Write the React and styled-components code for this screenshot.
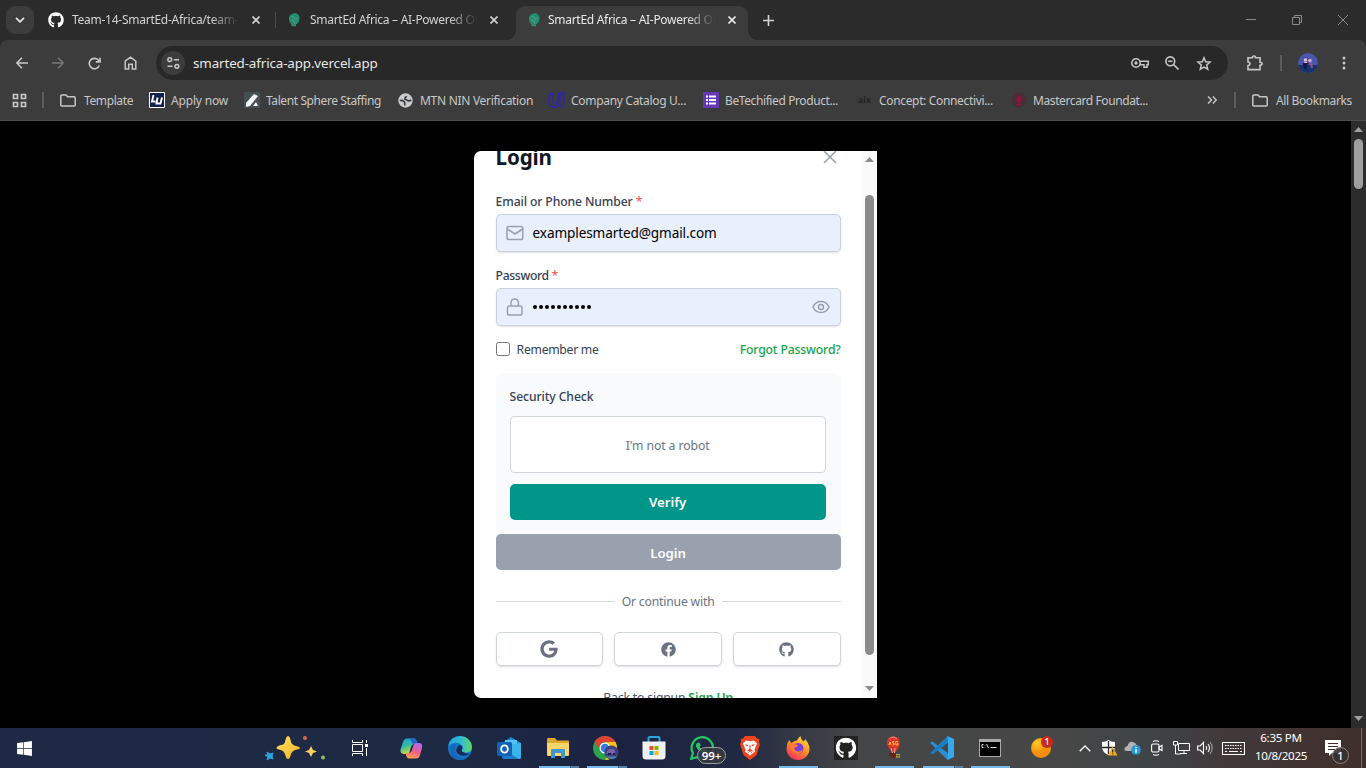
import React from "react";
import styled, { createGlobalStyle, css } from "styled-components";
import { FaGithub, FaFacebook, FaGoogle, FaWindows } from "react-icons/fa";

const Global = createGlobalStyle`
  *, *::before, *::after { box-sizing: border-box; }
  html, body { margin: 0; height: 100%; overflow: hidden; background: #000; }
  body { font-family: "Noto Sans", "Open Sans", sans-serif; font-size: 12px; }
  svg { display: block; flex: none; }
`;

const Screen = styled.div`
  width: 1366px;
  height: 768px;
  display: flex;
  flex-direction: column;
  overflow: hidden;
  background: #000;
`;

/* ---------- text ---------- */
const Text = styled.span`
  white-space: pre;
  letter-spacing: ${(p) => p.$ls || 0}px;
`;

/* ---------- tab strip ---------- */
const TabStrip = styled.header`
  height: 40px;
  flex: none;
  display: flex;
  background: #2b2b2b;
  color: #d3d3d3;
`;
const TabSearch = styled.div`
  width: 28px;
  height: 28px;
  margin: 6px 4px 0 6px;
  border-radius: 9px;
  background: #3c3c3c;
  display: grid;
  place-items: center;
`;
const Tab = styled.div`
  width: ${(p) => p.$width}px;
  flex: none;
  height: 34px;
  margin-top: 6px;
  padding: 0 ${(p) => p.$right}px 6px 10px;
  display: flex;
  align-items: center;
  position: relative;
  ${(p) =>
    p.$active &&
    css`
      background: #3c3c3c;
      color: #e8e8e8;
      border-radius: 9px 9px 0 0;
      &::before,
      &::after {
        content: "";
        position: absolute;
        bottom: 0;
        width: 9px;
        height: 9px;
      }
      &::before {
        left: -9px;
        background: radial-gradient(circle at 0 0, transparent 8.5px, #3c3c3c 9px);
      }
      &::after {
        right: -9px;
        background: radial-gradient(circle at 100% 0, transparent 8.5px, #3c3c3c 9px);
      }
    `}
`;
const Favicon = styled.span`
  width: 16px;
  margin-right: ${(p) => p.$gap}px;
  display: grid;
  place-items: center;
`;
const TabTitle = styled(Text)`
  flex: 1;
  overflow: hidden;
  margin-right: 13px;
  line-height: 20px;
  mask-image: linear-gradient(90deg, #000 calc(100% - 28px), transparent 100%);
`;
const TabDivider = styled.i`
  width: 1px;
  height: 16px;
  margin-top: 12px;
  background: #4a4a4a;
`;
const NewTab = styled.div`
  width: 40px;
  display: grid;
  place-items: center;
`;
const WindowControls = styled.div`
  margin-left: auto;
  display: flex;
`;
const WindowButton = styled.div`
  width: 46px;
  display: grid;
  place-items: center;
  color: #8a8a8a;
`;

/* ---------- toolbar ---------- */
const BrowserBar = styled.div`
  height: 81px;
  flex: none;
  background: #3c3c3c;
  border-bottom: 1px solid #4c4c4c;
  border-radius: 8px 8px 0 0;
  color: #c7c7c7;
`;
const BarBacking = styled.div`
  background: #2b2b2b;
`;
const Toolbar = styled.div`
  height: 40px;
  padding: 6px 4px 0;
  display: flex;
`;
const ToolButton = styled.div`
  width: 36px;
  height: 34px;
  flex: none;
  margin-left: ${(p) => p.$gap || 0}px;
  display: grid;
  place-items: center;
  color: ${(p) => (p.$dim ? "#777" : "#c7c7c7")};
`;
const Omnibox = styled.div`
  width: 1072px;
  height: 34px;
  flex: none;
  margin-left: 8px;
  padding: 0 8px 0 5px;
  border-radius: 17px;
  background: #282828;
  display: flex;
  align-items: center;
`;
const SiteInfo = styled.div`
  width: 24px;
  height: 24px;
  border-radius: 12px;
  background: #3c3c3c;
  display: grid;
  place-items: center;
  margin-right: 8px;
`;
const Url = styled(Text)`
  font-size: 13.4px;
  color: #e6e6e6;
  flex: 1;
`;
const OmniAction = styled.div`
  width: 32px;
  display: grid;
  place-items: center;
`;
const BarDivider = styled.i`
  width: 2px;
  height: 16px;
  flex: none;
  background: #5c5c5c;
  margin: ${(p) => p.$margin};
`;
const Avatar = styled.div`
  width: 20px;
  height: 20px;
  flex: none;
  margin: 7px 8px 0 16px;
`;

/* ---------- bookmarks ---------- */
const Bookmarks = styled.div`
  height: 40px;
  padding-left: 12px;
  display: flex;
  align-items: center;
`;
const Bookmark = styled.div`
  width: ${(p) => (p.$width ? p.$width + "px" : "auto")};
  flex: none;
  display: flex;
  align-items: center;
  gap: ${(p) => p.$gap}px;
`;
const AlxMark = styled.b`
  width: 15px;
  color: #222;
  font: 700 9px "Liberation Sans", sans-serif;
  letter-spacing: 0.2px;
`;

/* ---------- page ---------- */
const Page = styled.main`
  height: 607px;
  flex: none;
  display: flex;
  background: #000;
`;
const Backdrop = styled.div`
  flex: 1;
  display: flex;
  justify-content: center;
  align-items: center;
`;
const Scroller = styled.div`
  width: 15px;
  height: 100%;
  background: ${(p) => (p.$light ? "#fafafa" : "#2c2c2c")};
  display: flex;
  flex-direction: column;
  align-items: center;
  padding: 6px 0 7px;
  color: ${(p) => (p.$light ? "#8b8b8b" : "#9f9f9f")};
`;
const Thumb = styled.div`
  width: 9px;
  border-radius: 5px;
  background: currentColor;
  margin: ${(p) => p.$top}px 0 auto;
  height: ${(p) => p.$height}px;
`;

/* ---------- login dialog ---------- */
const Dialog = styled.section`
  width: 403px;
  height: 547px;
  background: #fff;
  border-radius: 7px 0 0 7px;
  overflow: hidden;
  display: flex;
`;
const DialogBody = styled.div`
  width: 388px;
  padding: 0 21.4px 0 21.6px;
  color: #364153;
  font-size: 12.2px;
  display: flex;
  flex-direction: column;
`;
const DialogHead = styled.div`
  height: 29px;
  margin-top: -8px;
  display: flex;
  justify-content: space-between;
  align-items: center;
  flex: none;
  color: #99a1af;
`;
const Title = styled.h2`
  margin: 0;
  font-size: 20.6px;
  line-height: 29px;
  font-weight: 700;
  letter-spacing: -0.15px;
  color: #101828;
`;
const CloseSlot = styled.div`
  width: 22px;
  margin-bottom: 2px;
  display: grid;
  place-items: center;
`;
const FieldLabel = styled.label`
  height: 18px;
  line-height: 18px;
  margin-top: ${(p) => p.$top}px;
  margin-bottom: 3px;
  font-weight: 500;
  white-space: pre;
  letter-spacing: ${(p) => p.$ls}px;
  flex: none;
`;
const Required = styled.span`
  color: #fb4c50;
  font-weight: 400;
`;
const Field = styled.div`
  height: 38px;
  flex: none;
  padding: 0 10px 0 9px;
  display: flex;
  align-items: center;
  background: #e8f0fe;
  border: 1px solid #c9d0de;
  border-radius: 5px;
  box-shadow: 0 1px 2px rgba(0, 0, 0, 0.12);
  color: #99a1af;
`;
const FieldValue = styled(Text)`
  flex: 1;
  margin-left: 9px;
  padding-bottom: 1px;
  font-size: 13.6px;
  color: #000;
`;
const Dots = styled.span`
  flex: 1;
  margin-left: 9px;
  display: flex;
  gap: 2px;
`;
const Dot = styled.i`
  width: 4px;
  height: 4px;
  border-radius: 50%;
  background: #000;
`;
const OptionsRow = styled.div`
  height: 20px;
  margin-top: 13px;
  flex: none;
  display: flex;
  align-items: center;
`;
const Checkbox = styled.span`
  width: 14px;
  height: 14px;
  border: 1px solid #767676;
  border-radius: 2.5px;
  margin-right: 7px;
`;
const GreenLink = styled.a`
  color: #16a34a;
  font-weight: ${(p) => p.$weight};
  letter-spacing: ${(p) => p.$ls}px;
  margin-left: ${(p) => (p.$end ? "auto" : 0)};
`;
const SecurityPanel = styled.div`
  height: 161px;
  margin-top: 14px;
  flex: none;
  padding: 15px 15px 0 14px;
  background: #f9fafb;
  border-radius: 7px 7px 0 0;
`;
const PanelTitle = styled.div`
  height: 18px;
  line-height: 18px;
  font-weight: 500;
  letter-spacing: -0.1px;
  white-space: pre;
`;
const RobotBox = styled.div`
  height: 57px;
  margin: 10px 0 11px;
  padding-top: 2px;
  display: grid;
  place-items: center;
  background: #fff;
  border: 1px solid #d1d5dc;
  border-radius: 4px;
  color: #6a7282;
`;
const Button = styled.button`
  display: block;
  width: 100%;
  height: 36px;
  flex: none;
  padding: 0;
  border: 0;
  border-radius: 5px;
  background: ${(p) => (p.$muted ? "#99a1af" : "#009689")};
  color: #fff;
  font: 600 13.2px/36px "Noto Sans", sans-serif;
  padding-top: ${(p) => (p.$muted ? 1 : 0)}px;
`;
const OrRow = styled.div`
  margin-top: 21px;
  height: 20px;
  flex: none;
  display: flex;
  align-items: center;
  gap: 7px;
  color: #6a7282;
  &::before,
  &::after {
    content: "";
    height: 1px;
    flex: 1;
    background: #d1d5dc;
  }
`;
const Socials = styled.div`
  display: grid;
  grid-template-columns: repeat(3, 1fr);
  gap: 11px;
  margin-top: 21px;
`;
const SocialButton = styled.div`
  height: 34px;
  display: grid;
  place-items: center;
  border: 1px solid #d1d5dc;
  border-radius: 5px;
  box-shadow: 0 1px 2px rgba(0, 0, 0, 0.13);
  color: #6a7282;
`;
const SignUpLine = styled.div`
  margin-top: 23px;
  height: 18px;
  line-height: 18px;
  text-align: center;
  color: #4a5565;
  white-space: pre;
`;

/* ---------- taskbar ---------- */
const Taskbar = styled.footer`
  height: 40px;
  flex: none;
  display: flex;
  color: #fff;
  background: linear-gradient(
    90deg,
    #1e2a45 0,
    #1e2a44 420px,
    #1b2341 610px,
    #222942 740px,
    #363a44 800px,
    #444546 860px,
    #474747 1060px,
    #3e4446 1150px,
    #42383a 1230px,
    #3f2f2a 1366px
  );
`;
const TaskCell = styled.div`
  width: ${(p) => p.$width || 48}px;
  flex: none;
  margin-left: ${(p) => p.$gap || 0}px;
  height: 40px;
  display: grid;
  place-items: center;
  position: relative;
`;
const Running = styled.i`
  position: absolute;
  left: 5px;
  bottom: 0;
  width: ${(p) => (p.$stacked ? 40 : 39)}px;
  height: 2px;
  background: ${(p) =>
    p.$stacked ? "linear-gradient(90deg, #76b9ed 31px, #42668a 31px 32px, #587fa5 32px)" : "#76b9ed"};
`;
const CountBadge = styled.span`
  position: absolute;
  left: 19px;
  top: 19px;
  width: 29px;
  height: 17px;
  border: 1px solid #9a9fa5;
  border-radius: 9px;
  background: rgba(54, 58, 66, 0.9);
  font: 600 11.5px/15px "Noto Sans", sans-serif;
  text-align: center;
`;
const RedBadge = styled.span`
  position: absolute;
  left: 24px;
  top: 8px;
  width: 12px;
  height: 12px;
  border-radius: 6px;
  background: #c42b1c;
  font: 500 9px/12px "Noto Sans", sans-serif;
  text-align: center;
`;
const Clock = styled.div`
  width: 64px;
  flex: none;
  padding-top: 1px;
  display: flex;
  flex-direction: column;
  align-items: center;
  line-height: 18px;
  font-size: 11.6px;
`;
const NoticeBadge = styled.span`
  position: absolute;
  left: 19px;
  top: 19px;
  width: 17px;
  height: 17px;
  border: 1px solid #8a8583;
  border-radius: 9px;
  background: rgba(54, 49, 48, 0.9);
  font: 500 11px/15px "Noto Sans", sans-serif;
  text-align: center;
`;
const ShowDesktop = styled.div`
  width: 5px;
  margin-left: auto;
  border-left: 1px solid #7b706d;
`;

/* ---------- icons ---------- */
const Line = ({ s = 16, h, sw = 1.6, vb, children, ...r }) => (
  <svg width={s} height={h || s} viewBox={vb || `0 0 ${s} ${h || s}`} fill="none" stroke="currentColor" strokeWidth={sw} {...r}>
    {children}
  </svg>
);
const CloseIcon = () => <Line s={8} sw={1.6}><path d="M.5.5l7 7M7.500.5l-7 7" /></Line>;
const ArrowUp = () => <svg width="9" height="5" viewBox="0 0 9 5"><path d="M4.500 0L9 5H0z" fill="currentColor" /></svg>;
const ArrowDown = () => <svg width="9" height="5" viewBox="0 0 9 5"><path d="M4.500 5L9 0H0z" fill="currentColor" /></svg>;
const Sprout = () => (
  <svg width="12" height="14" viewBox="0 0 12 14">
    <path d="M1 4Q2 1 7 0Q12 1 11.5 6Q11 10 8 11.5L8 13.5L3 13Q4 11 2 9Q.5 7 1 4z" fill="#238d70" />
    <path d="M3 4Q5 2 6 4L7.5 7L10 4.5M3 8L5 7L7 10.5" stroke="#4f9f86" fill="none" />
    <path d="M1.500 9.500L4 10V13" stroke="#506961" fill="none" />
  </svg>
);
const Folder = () => <Line s={16} h={13} sw={1.5}><path d="M.8 2Q.8 1 1.8 1H6L7.600 2.800H14Q15.200 2.800 15.200 4V11Q15.200 12 14.200 12H1.800Q.8 12 .8 11z" /></Line>;

const Shards = () => (
  <svg width="64" height="30" viewBox="0 0 64 30">
    <defs><linearGradient id="gold" x2="1" y2="1"><stop stopColor="#ffdf5a" /><stop offset="1" stopColor="#f7b32b" /></linearGradient></defs>
    <path d="M24 3Q26 3 27 9Q28 12 32 13Q36 14 36 15Q36 16 31 17Q28 18 27 21Q26 26 24 26Q22 26 21 21Q20 18 17 17Q12 16 12.500 15Q13 13 17 12Q20 12 21 9Q22 3 24 3z" fill="url(#gold)" />
    <path d="M47 13L49 17L53 18.500L49 20L47 24L45 20L41 18.500L45 17z" fill="#ffd05a" />
    <path d="M3 19L6 21L9 20L8 23L9 26L6 25L3 27L4 24L1 22L4 22z" fill="#2aa3e0" stroke="#2aa3e0" />
    <circle cx="41" cy="5" r="2" fill="#d9694b" /><circle cx="59" cy="24.500" r="2" fill="#8fbf69" />
  </svg>
);
const TaskView = () => <Line s={16} h={16} sw={1}><path d="M.5 0v2.500h10V0M.5 16v-2.500h10V16M.5 4.500h10v7H.5zM14.500 0v3M14.500 8v8" /><path d="M13 4h3v3h-3z" fill="currentColor" stroke="none" /></Line>;
const Copilot = () => (
  <svg width="23" height="21" viewBox="0 0 23 21">
    <defs>
      <linearGradient id="coA" x2=".4" y2="1"><stop stopColor="#1f9bea" /><stop offset=".5" stopColor="#31b8a2" /><stop offset="1" stopColor="#d4df39" /></linearGradient>
      <linearGradient id="coB" x1=".6" x2=".3" y2="1"><stop stopColor="#b06be8" /><stop offset=".5" stopColor="#ed5d91" /><stop offset="1" stopColor="#ffa348" /></linearGradient>
    </defs>
    <path d="M7 .5H14Q16 .5 17 4L17.500 6H14Q12 6 11 9L9.500 14Q9 16.500 6 16H4Q-.5 15.500.7 11L3 4Q4 .5 7 .5z" fill="url(#coA)" />
    <path d="M12 .5H14Q16 .5 17 4L17.500 6H14Q12 6 11.500 4Q11 1 9 .5z" fill="#2164d3" />
    <path d="M16 20.500H9Q7 20.500 6 17L5.500 15H9Q11 15 12 12L13.500 7Q14 5 17 5H19Q23 5 22 10L20 17Q19 20.500 16 20.500z" fill="url(#coB)" />
  </svg>
);
const Edge = () => (
  <svg width="24" height="24" viewBox="0 0 24 24">
    <defs><linearGradient id="edA" x2="1"><stop stopColor="#219fe0" /><stop offset=".6" stopColor="#35c1c8" /><stop offset="1" stopColor="#62d657" /></linearGradient></defs>
    <circle cx="12" cy="12" r="12" fill="#1375cc" />
    <path d="M.2 10Q2 0 12.500 0Q23 1 24 11Q24 16.500 18 16.500Q13 16.500 14 14Q16 12 14 9.500Q11 6 6 7Q1 8.500.2 10z" fill="url(#edA)" />
    <path d="M8 11Q5 16 10 20.500Q14 24 20 20Q16 26 9 23.600Q2 21 2 14Q2 8 9 7.500Q7 8.500 8 11z" fill="#1668b4" />
    <path d="M10 10Q6 15 11 18.500Q16 21.500 22.500 17.500Q18 18.500 14.500 16Q13 15 14 13Q15 10 12 9z" fill="#1a2a50" />
  </svg>
);
const Outlook = () => (
  <svg width="25" height="24" viewBox="0 0 25 24">
    <path d="M5 7L14 1L24 7V21Q24 23 22 23H8Q5 23 5 20z" fill="#1c88d4" />
    <path d="M8 4h12v10H8z" fill="#55c6f2" /><path d="M14 8l10-1v14q0 2-2 2H8z" fill="#3bb4ea" /><path d="M5 13l17 10H8q-3 0-3-3z" fill="#1e7cc9" />
    <rect y="6" width="15" height="14" rx="1.500" fill="#0f62b6" /><ellipse cx="7.500" cy="13" rx="3.300" ry="3.600" fill="none" stroke="#fff" strokeWidth="1.900" />
  </svg>
);
const Explorer = () => (
  <svg width="22" height="20" viewBox="0 0 22 20">
    <path d="M0 1Q0 0 1 0H8L10 2.500H21Q22 2.500 22 3.500V8H0z" fill="#dda72a" /><path d="M0 5H22V17Q22 18 21 18H1Q0 18 0 17z" fill="#fbd56b" />
    <path d="M4 20V12Q4 11 5 11H17Q18 11 18 12V20H14V15H8V20z" fill="#3f97cf" />
  </svg>
);
const Chrome = () => (
  <svg width="26" height="24" viewBox="0 0 26 24">
    <circle cx="12" cy="12" r="12" fill="#29a34e" />
    <path d="M22.400 6A12 12 0 0 1 12 24L17.200 15A6 6 0 0 0 17.200 9L12 6z" fill="#fbc116" />
    <path d="M1.600 6A12 12 0 0 1 22.400 6H12Q8 6 6.500 10L5.500 12z" fill="#e34133" />
    <circle cx="12" cy="12" r="5.500" fill="#fff" /><circle cx="12" cy="12" r="4.300" fill="#3679df" />
    <circle cx="18.500" cy="16.500" r="7" fill="#3c407f" /><path d="M14 15q4-4 8-1v4h-8z" fill="#7762a8" /><path d="M15 17h3v2h-3zM20 17h2v2h-2z" fill="#17204b" /><path d="M13 20.500q6 5 11 0z" fill="#4e83ad" />
  </svg>
);
const Store = () => (
  <svg width="24" height="24" viewBox="0 0 24 24">
    <path d="M6.500 7V2.500Q6.500 1 8 1H16Q17.500 1 17.500 2.500V7" fill="none" stroke="#28a5e0" strokeWidth="2" />
    <path d="M.5 5.500H23.500V20Q23.500 23.500 20 23.500H4Q.5 23.500.5 20z" fill="#eef0f2" />
    <path d="M7.500 10h4v4h-4z" fill="#f25022" /><path d="M12.500 10h4v4h-4z" fill="#7fba00" /><path d="M7.500 15h4v4h-4z" fill="#00a4ef" /><path d="M12.500 15h4v4h-4z" fill="#ffb900" />
  </svg>
);
const WhatsApp = () => (
  <svg width="24" height="24" viewBox="0 0 24 24">
    <path d="M1.200 22.800L2.900 17A10.700 10.700 0 1 1 7 21.200z" fill="none" stroke="#25c561" strokeWidth="2.200" />
    <path d="M8 6.500q1.500-.5 2 1l.6 1.500q.2.600-1 1.800 1.300 2.400 3.800 3.400l1.300-1.400 2.600 1.200q.8 3-3 3-6-1-8.300-6.500Q5.600 7.500 8 6.500z" fill="#25c561" />
  </svg>
);
const Brave = () => (
  <svg width="20" height="24" viewBox="0 0 20 24">
    <path d="M5 0H15L17 2.500L19.500 3L18.800 6L20 8L16.500 19L10 24L3.500 19L0 8L1.200 6L.5 3L3 2.500z" fill="#f04420" />
    <path d="M6 4.500L10 5.300L14 4.500L17 7.500L14.500 13.500L15 15.500L10 19.500L5 15.500L5.500 13.500L3 7.500z" fill="#fff" />
    <path d="M5 8L8.500 9L7 10.500zM15 8L11.500 9L13 10.500zM9.500 9h1v4l2 1.500L10 16l-2.500-1.500 2-1.500zM6.500 14l2.500 2.500-.5.8zM13.500 14L11 16.500l.5.8z" fill="#f04420" />
  </svg>
);
const Firefox = () => (
  <svg width="24" height="24" viewBox="0 0 24 24">
    <defs><linearGradient id="ff" x1=".8" x2=".2" y2="1"><stop stopColor="#ffe23c" /><stop offset=".5" stopColor="#ff8a27" /><stop offset="1" stopColor="#ee2768" /></linearGradient></defs>
    <path d="M3 4L5.500 7Q8 4.500 11 4.500Q12 2 14.500 0Q15 4 18 5.500L19 3Q23.500 8 23.500 13A11.500 11 0 0 1 .5 13Q.3 8 3 4z" fill="url(#ff)" />
    <circle cx="12" cy="12.500" r="5.500" fill="#7a3fd8" /><path d="M4 9Q8 7 12 9.500Q11 11.500 8.500 11.500Q8 15 12 15.500Q15 15.500 17 13Q16 18 11 18Q5 17 4 9z" fill="#ff7a31" />
  </svg>
);
const GithubTile = () => (
  <svg width="24" height="24" viewBox="0 0 24 24"><path d="M0 0h24v24H0z" fill="#222" /><g transform="translate(1.500 1.500)" color="#fff"><FaGithub size={21} /></g></svg>
);
const Balloon = () => (
  <svg width="16" height="24" viewBox="0 0 16 24">
    <path d="M1 8Q0 1 7 .5Q14 0 14 7Q13 13 9 16H6Q2 12 1 8z" fill="#db352b" /><path d="M3 3Q7-1 11 3" stroke="#e88b7a" fill="none" />
    <path d="M3 9l1-3 1 3M8 5.500H6.500v1.500H8V9H6.500M12 5.500H9.800V9H12V7.300h-1" stroke="#ffc83a" strokeWidth=".9" fill="none" /><path d="M5 12L6.500 17M9 12L8.500 17" stroke="#f0a19a" />
    <path d="M3 17h7v3H3zM5 20h4v2H5z" fill="#6e1f20" /><path d="M10 18h4v4h-4z" fill="#a8a545" /><path d="M10.500 19.500h3M10.500 21h3" stroke="#434a23" strokeWidth=".8" />
  </svg>
);
const VsCode = () => (
  <svg width="24" height="24" viewBox="0 0 24 24">
    <path d="M2.500 5.500L0 6.800L17.500 24L19 22V18z" fill="#2a8fd0" />
    <path d="M2.500 18.500L0 17.200L17.500 0L19 2V6z" fill="#1b7dc2" />
    <path d="M17.500 0L24 3V21L17.500 24L18 19V5z" fill="#35a9ee" />
  </svg>
);
const Terminal = () => (
  <svg width="22" height="18" viewBox="0 0 22 18"><path d="M0 0h22v18H0z" fill="#aaa" /><path d="M1 3h20v14H1z" fill="#000" /><path d="M4.500 5.500H3v3h1.500M6 6v.5M6 8v.5M7.500 5l2 4M11.500 8.500h6" stroke="#ddd" fill="none" /></svg>
);
const Orb = () => (
  <svg width="20" height="20" viewBox="0 0 20 20"><defs><radialGradient id="orb" cx=".3" cy=".25"><stop stopColor="#ffcb24" /><stop offset="1" stopColor="#f48d10" /></radialGradient></defs><circle cx="10" cy="10" r="10" fill="url(#orb)" /></svg>
);
const Chevron = () => <Line s={12} h={7} sw={1.3}><path d="M.7 6.300L6 1l5.300 5.300" /></Line>;
const Shield = () => (
  <svg width="17" height="16" viewBox="0 0 17 16"><path d="M1 2Q5 2 7.500 0Q10 2 14 2V8Q13 13 7.500 15Q2 13 1 8z" fill="#fff" /><path d="M7.500 1v13M1 7.500h13" stroke="#242424" strokeWidth="1.300" /><path d="M11.500 6.500L16.500 15.500H7z" fill="#f6aa1c" /><path d="M11.700 9.500v3M11.700 13.500v1" stroke="#272727" strokeWidth="1.200" /></svg>
);
const Cloud = () => (
  <svg width="18" height="14" viewBox="0 0 18 14"><path d="M3 10Q0 10 .5 7.500Q1 5 3.500 5Q5 0 9 1Q12 2 12.500 4Q16 5 15 10z" fill="#aeb2b4" /><circle cx="12" cy="9" r="4.800" fill="#2798de" /><path d="M12 6v1.300M12 8.300v3.500" stroke="#fff" strokeWidth="1.500" /></svg>
);
const MeetNow = () => <Line s={12} h={16} sw={1.1}><path d="M2 1.500q3-1.500 6 0M2 14.500q3 1.500 6 0" /><rect x=".6" y="4" width="7.400" height="8" rx="1.500" /><path d="M8 7l3-1.500v5L8 9z" /></Line>;
const Network = () => <Line s={17} h={14} sw={1}><path d="M5.500 2.500h11v7h-11zM11 9.500v3M7 12.500h7M.5.500h4v3.500h-4zM2.500 4v9h5" /></Line>;
const Sound = () => <Line s={17} h={14} sw={1.1}><path d="M.6 5h2.600L6.500 1.500v11L3.200 9H.6zM9 5q1.500 2 0 4M11 3q3 4 0 8" /><path d="M13 1q4.500 6 0 12" opacity=".5" /></Line>;
const Keyboard = () => <Line s={23} h={13} sw={1}><rect x=".5" y=".5" width="22" height="12" /><path d="M3 3.500h17M3 6.500h17" strokeDasharray="1.500 1" /><path d="M3 9.500h2M7 9.500h9M18 9.500h2" /></Line>;
const Notice = () => <svg width="16" height="16" viewBox="0 0 16 16"><path d="M0 0h16v13H7L4 16V13H0z" fill="#fff" /><path d="M3 3.500h10M3 6.500h10M3 9.500h7" stroke="#40302b" /></svg>;

const TABS = [
  { title: "Team-14-SmartEd-Africa/team-", width: 237, right: 15, gap: 8, ls: -0.26 },
  { title: "SmartEd Africa – AI-Powered Of", width: 240, right: 18, gap: 8, ls: -0.29 },
  { title: "SmartEd Africa – AI-Powered Of", width: 232, right: 12, gap: 6, ls: -0.29, active: true },
];

const BOOKMARKS = [
  { label: "Template", width: 89, gap: 8, ls: -0.39, icon: <Folder /> },
  { label: "Apply now", width: 95, gap: 6, ls: -0.18, icon: (
    <svg width="16" height="16" viewBox="0 0 16 16"><path d="M.5.500h15v15H.5z" fill="#11204b" stroke="#fff" /><path d="M4.500 3L3 9.500H6.500M8.500 5.500L7.500 11.500H11.500L13 5.500" stroke="#fff" strokeWidth="1.900" fill="none" /></svg>) },
  { label: "Talent Sphere Staffing", width: 154, gap: 6, ls: -0.4, icon: (
    <svg width="16" height="16" viewBox="0 0 16 16"><path d="M0 0h16v16H0z" fill="#435054" /><path d="M2 11L10 2L14 4L6 14L2 15z" fill="#f5f5f5" /><path d="M9 14L12 10L14 14z" fill="#fff" /></svg>) },
  { label: "MTN NIN Verification", width: 150, gap: 7, ls: -0.29, icon: (
    <svg width="15" height="15" viewBox="0 0 15 15"><circle cx="7.500" cy="7.500" r="7.200" fill="#c9cbce" /><path d="M1.800 7.500Q4.500 7 5.500 8.300Q7 8.800 6.800 10.500V12.500M13.200 7Q11.500 8.500 9.500 7.500Q8.500 6.500 7 6.300Q6.500 4 9 3.500" fill="none" stroke="#3c3c3c" strokeWidth="1.700" /></svg>) },
  { label: "Company Catalog U...", width: 155, gap: 6, ls: -0.31, icon: (
    <svg width="17" height="16" viewBox="0 0 17 16" fill="none" stroke="#3024b5" strokeWidth="1.400"><path d="M1 2.500L5 1V10Q5 12.500 7.500 12Q10 11.500 10 9V2L12 1V9Q12 15 6.500 15Q1 15 1 10zM12 2L16 .8V10Q16 14.500 12 15" /></svg>) },
  { label: "BeTechified Product...", width: 155, gap: 6, ls: -0.4, icon: (
    <svg width="16" height="16" viewBox="0 0 16 16"><path d="M0 0h16v16H0z" fill="#6738b5" /><path d="M3 4.500h2M6 4.500h7M3 8h2M6 8h7M3 11.500h2M6 11.500h7" stroke="#fff" strokeWidth="1.900" /></svg>) },
  { label: "Concept: Connectivi...", width: 153, gap: 6, ls: -0.34, icon: <AlxMark>alx</AlxMark> },
  { label: "Mastercard Foundat...", width: 196, gap: 6, ls: -0.4, icon: (
    <svg width="16" height="16" viewBox="0 0 16 16"><circle cx="8" cy="8" r="7.500" fill="#4b2c37" /><path d="M8 3L10.500 6V9L8.700 10V12H10.500V13H5.500V12H7.300V10L5.500 9V6z" fill="#8f1440" /></svg>) },
];

const TASKS = [
  { icon: <TaskView />, gap: 2 },
  { icon: <Copilot />, gap: 3 },
  { icon: <Edge />, gap: 1 },
  { icon: <Outlook />, gap: 1 },
  { icon: <Explorer />, gap: 1, run: "stacked" },
  { icon: <Chrome />, run: "stacked" },
  { icon: <Store /> },
  { icon: <WhatsApp />, badge: "99+" },
  { icon: <Brave /> },
  { icon: <Firefox />, run: "single" },
  { icon: <GithubTile /> },
  { icon: <Balloon />, run: "single" },
  { icon: <VsCode />, run: "stacked" },
  { icon: <Terminal />, run: "single" },
];

function BrowserTabs() {
  return (
    <TabStrip>
      <TabSearch><Line s={10} h={6} sw={1.8} color="#e3e3e3"><path d="M1 .8l4 4 4-4" /></Line></TabSearch>
      {TABS.map((t, i) => (
        <React.Fragment key={i}>
          <Tab $width={t.width} $right={t.right} $active={t.active}>
            <Favicon $gap={t.gap}>{i ? <Sprout /> : <FaGithub size={16} color="#fff" />}</Favicon>
            <TabTitle $ls={t.ls}>{t.title}</TabTitle>
            <CloseIcon />
          </Tab>
          {i === 0 && <TabDivider />}
        </React.Fragment>
      ))}
      <NewTab><Line s={11} sw={1.6}><path d="M5.500 0v11M0 5.500h11" /></Line></NewTab>
      <WindowControls>
        <WindowButton><Line s={10} sw={1}><path d="M0 4.500h10" /></Line></WindowButton>
        <WindowButton><Line s={10} sw={1}><path d="M.5 2.500h7v7h-7zM2.500 2.500v-2h7v7h-2" /></Line></WindowButton>
        <WindowButton><Line s={10} sw={1}><path d="M0 0l10 10M10 0L0 10" /></Line></WindowButton>
      </WindowControls>
    </TabStrip>
  );
}

function BrowserToolbar() {
  return (
    <Toolbar>
      <ToolButton><Line s={12} sw={1.6}><path d="M12 6H1M6 .8L.9 6 6 11.200" /></Line></ToolButton>
      <ToolButton $dim><Line s={12} sw={1.6}><path d="M0 6h11M6 .8L11.100 6 6 11.200" /></Line></ToolButton>
      <ToolButton><Line s={13} sw={1.6}><path d="M11.300 8.500A5.200 5.200 0 1 1 10.300 3L12 4.700M12 .8V4.900H7.800" /></Line></ToolButton>
      <ToolButton><Line s={13} h={14} sw={1.5}><path d="M1.200 5.200L6.500 1.200l5.300 4V13H8.300V8.200H4.700V13H1.200z" /></Line></ToolButton>
      <Omnibox>
        <SiteInfo><Line s={13} h={12} sw={1.5}><circle cx="2.800" cy="2.700" r="1.900" /><path d="M6.800 2.700H12M.5 9.300h5" /><circle cx="9.900" cy="9.300" r="1.900" /></Line></SiteInfo>
        <Url $ls={-0.13}>smarted-africa-app.vercel.app</Url>
        <OmniAction><Line s={18} h={10} sw={1.5}><circle cx="5" cy="5" r="4.200" /><path d="M9 3.200h8.200v3.600H16v2.400h-3V6.800H9" /><circle cx="5" cy="5" r=".9" fill="currentColor" /></Line></OmniAction>
        <OmniAction><Line s={14} sw={1.6}><circle cx="5.300" cy="5.300" r="4.400" /><path d="M8.500 8.500l5 5M3.200 5.300h4.200" /></Line></OmniAction>
        <OmniAction><Line s={16} h={15} sw={1.5}><path d="M8 1.800l1.700 4 4.300.4-3.300 2.800 1 4.200L8 11l-3.700 2.200 1-4.200L2 6.200l4.300-.4z" /></Line></OmniAction>
      </Omnibox>
      <ToolButton $gap={9}><Line s={16} h={16} sw={1.6}><path d="M1 2.800h4.500Q5.500 1 7 1t1.500 1.800H13v4.400q2 0 2 1.500t-2 1.500v4.400H1v-4q2-.3 2-1.900T1 7z" /></Line></ToolButton>
      <BarDivider $margin="9px 0 0 7px" />
      <Avatar>
        <svg width="20" height="20" viewBox="0 0 20 20">
          <defs><clipPath id="av"><circle cx="10" cy="10" r="10" /></clipPath></defs>
          <g clipPath="url(#av)"><path d="M0 0h20v20H0z" fill="#4a55ae" /><path d="M0 12h20v8H0z" fill="#16336f" /><circle cx="7.500" cy="7" r="1.700" fill="#e6c4cf" /><circle cx="12" cy="7.500" r="1.700" fill="#d9b0c6" /><path d="M6 9h3v3H6z" fill="#c9b3c9" /><path d="M11 9h3l1 6h-2l-1-3h-1z" fill="#8e5298" /><path d="M4.500 10h6v1.500H9L8 17H7z" fill="#171a3c" /></g>
        </svg>
      </Avatar>
      <ToolButton><Line s={4} h={14}><g fill="currentColor" stroke="none"><circle cx="2" cy="2" r="1.500" /><circle cx="2" cy="7" r="1.500" /><circle cx="2" cy="12" r="1.500" /></g></Line></ToolButton>
    </Toolbar>
  );
}

function BookmarksBar() {
  return (
    <Bookmarks>
      <Line s={15} h={15} sw={1.7}><path d="M1.500 1.500h4v4h-4zM9.500 1.500h4v4h-4zM1.500 9.500h4v4h-4zM9.500 9.500h4v4h-4z" /></Line>
      <BarDivider $margin="0 16px 0 15px" />
      {BOOKMARKS.map((b) => (
        <Bookmark key={b.label} $width={b.width} $gap={b.gap}>{b.icon}<Text $ls={b.ls}>{b.label}</Text></Bookmark>
      ))}
      <Line s={10} h={8} sw={1.5}><path d="M1 .5L4.500 4 1 7.500M5.800.500L9.300 4 5.800 7.500" /></Line>
      <BarDivider $margin="0 16px 0 17px" />
      <Bookmark $gap={8}><Folder /><Text $ls={-0.37}>All Bookmarks</Text></Bookmark>
    </Bookmarks>
  );
}

function LoginDialog() {
  return (
    <Dialog>
      <DialogBody>
        <DialogHead>
          <Title>Login</Title>
          <CloseSlot><Line s={14} sw={1.5}><path d="M1 1l12 12M13 1L1 13" /></Line></CloseSlot>
        </DialogHead>
        <FieldLabel $top={21} $ls={-0.12}>Email or Phone Number <Required>*</Required></FieldLabel>
        <Field>
          <Line s={18} h={16} sw={1.5}><rect x="1" y="1.500" width="15.800" height="13" rx="1.800" /><path d="M1.200 4L9 9l7.700-5" /></Line>
          <FieldValue $ls={-0.12}>examplesmarted@gmail.com</FieldValue>
        </Field>
        <FieldLabel $top={15} $ls={-0.36}>Password <Required>*</Required></FieldLabel>
        <Field>
          <Line s={18} h={18} sw={1.5}><rect x="1.500" y="8" width="14.500" height="9" rx="1.800" /><path d="M5 8V5q0-4 3.700-4t3.700 4v3" /></Line>
          <Dots>{Array.from({ length: 10 }, (_, i) => <Dot key={i} />)}</Dots>
          <Line s={18} h={14} sw={1.5}><path d="M1 7Q3.500 1.500 9 1.500T17 7Q14.500 12.500 9 12.500T1 7z" /><circle cx="9" cy="7" r="2.500" /></Line>
        </Field>
        <OptionsRow>
          <Checkbox />
          <Text $ls={-0.27}>Remember me</Text>
          <GreenLink $end $weight={500} $ls={-0.14}>Forgot Password?</GreenLink>
        </OptionsRow>
        <SecurityPanel>
          <PanelTitle>Security Check</PanelTitle>
          <RobotBox><Text $ls={-0.07}>I'm not a robot</Text></RobotBox>
          <Button>Verify</Button>
        </SecurityPanel>
        <Button $muted>Login</Button>
        <OrRow><Text $ls={-0.18}>Or continue with</Text></OrRow>
        <Socials>
          <SocialButton><FaGoogle size={18} /></SocialButton>
          <SocialButton><FaFacebook size={15} /></SocialButton>
          <SocialButton><FaGithub size={15} /></SocialButton>
        </Socials>
        <SignUpLine><Text $ls={-0.16}>Back to signup </Text><GreenLink $weight={600} $ls={-0.12}>Sign Up</GreenLink></SignUpLine>
      </DialogBody>
      <Scroller $light><ArrowUp /><Thumb $top={33} $height={460} /><ArrowDown /></Scroller>
    </Dialog>
  );
}

function WindowsTaskbar() {
  return (
    <Taskbar>
      <TaskCell><FaWindows size={17} /></TaskCell>
      <TaskCell $gap={210} $width={76}><Shards /></TaskCell>
      {TASKS.map((t, i) => (
        <TaskCell key={i} $gap={t.gap}>
          {t.icon}
          {t.run && <Running $stacked={t.run === "stacked"} />}
          {t.badge && <CountBadge>{t.badge}</CountBadge>}
        </TaskCell>
      ))}
      <TaskCell $gap={3}><Orb /><RedBadge>1</RedBadge></TaskCell>
      <TaskCell $gap={8} $width={24}><Chevron /></TaskCell>
      <TaskCell $width={24}><Shield /></TaskCell>
      <TaskCell $width={24}><Cloud /></TaskCell>
      <TaskCell $width={24}><MeetNow /></TaskCell>
      <TaskCell $width={24}><Network /></TaskCell>
      <TaskCell $width={24}><Sound /></TaskCell>
      <TaskCell $width={32}><Keyboard /></TaskCell>
      <Clock><Text $ls={-0.3}>6:35 PM</Text><Text $ls={-0.35}>10/8/2025</Text></Clock>
      <TaskCell $width={40}><Notice /><NoticeBadge>1</NoticeBadge></TaskCell>
      <ShowDesktop />
    </Taskbar>
  );
}

export default function App() {
  return (
    <Screen>
      <Global />
      <BrowserTabs />
      <BarBacking>
        <BrowserBar>
          <BrowserToolbar />
          <BookmarksBar />
        </BrowserBar>
      </BarBacking>
      <Page>
        <Backdrop><LoginDialog /></Backdrop>
        <Scroller><ArrowUp /><Thumb $top={7} $height={50} /><ArrowDown /></Scroller>
      </Page>
      <WindowsTaskbar />
    </Screen>
  );
}
